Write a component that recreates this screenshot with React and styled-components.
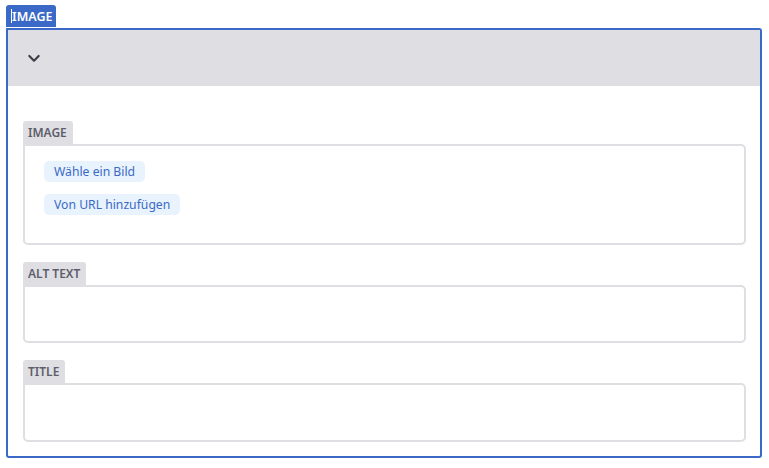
import React from "react";
import styled, { createGlobalStyle } from "styled-components";

const GlobalStyle = createGlobalStyle`
  body {
    margin: 0;
    background: #fff;
    font-family: "Noto Sans", "Open Sans", sans-serif;
  }
`;

const Page = styled.div`
  padding: 5px 7px 12px 6px;
`;

const Tab = styled.div`
  display: inline-flex;
  align-items: center;
  height: 22px;
  padding: 0 4px 0 5px;
  border-radius: 3px 3px 0 0;
  font-size: 12.5px;
  font-weight: 600;
  background: ${(p) => (p.active ? "#3a69c7" : "#dfdfe3")};
  color: ${(p) => (p.active ? "#fff" : "#5d5e6b")};
`;

const Cursor = styled.span`
  display: inline-block;
  width: 1px;
  height: 14px;
  background: #fff;
`;

const Outer = styled.div`
  border: 2px solid #3a69c7;
  border-radius: 0 3px 3px 3px;
  padding-bottom: 14px;
`;

const Header = styled.div`
  height: 56px;
  background: #dfdee3;
  display: flex;
  align-items: center;
  padding-left: 18px;
  color: #3c3d48;
`;

const Body = styled.div`
  display: flex;
  flex-direction: column;
  gap: 17px;
  padding: 35px 14px 0 15px;
`;

const Field = styled.div`
  display: flex;
  flex-direction: column;
  align-items: flex-start;
`;

const FieldTab = styled(Tab)`
  height: 23px;
  padding: 0 6px 0 5px;
  font-size: 12px;
`;

const FieldBox = styled.div`
  align-self: stretch;
  box-sizing: border-box;
  height: ${(p) => p.h}px;
  border: 2px solid #dfdfe3;
  border-radius: 0 5px 5px 5px;
  display: flex;
  flex-direction: column;
  align-items: flex-start;
  gap: 12px;
  padding: 15px 19px;
`;

const LinkButton = styled.button`
  border: none;
  background: #e8f3fe;
  color: #3a69c7;
  font-family: inherit;
  font-size: 12.2px;
  height: 21px;
  padding: 0 10px;
  border-radius: 5px;
  cursor: pointer;
`;

function Chevron() {
  return (
    <svg width="16" height="16" viewBox="0 0 24 24" fill="none" stroke="currentColor" strokeWidth="3.2" strokeLinecap="round" strokeLinejoin="round">
      <path d="M5 9l7 7 7-7" />
    </svg>
  );
}

export default function App() {
  return (
    <Page>
      <GlobalStyle />
      <Tab active>
        <Cursor />
        IMAGE
      </Tab>
      <Outer>
        <Header>
          <Chevron />
        </Header>
        <Body>
          <Field>
            <FieldTab>IMAGE</FieldTab>
            <FieldBox h={101}>
              <LinkButton>Wähle ein Bild</LinkButton>
              <LinkButton>Von URL hinzufügen</LinkButton>
            </FieldBox>
          </Field>
          <Field>
            <FieldTab>ALT TEXT</FieldTab>
            <FieldBox h={58} />
          </Field>
          <Field>
            <FieldTab>TITLE</FieldTab>
            <FieldBox h={59} />
          </Field>
        </Body>
      </Outer>
    </Page>
  );
}
